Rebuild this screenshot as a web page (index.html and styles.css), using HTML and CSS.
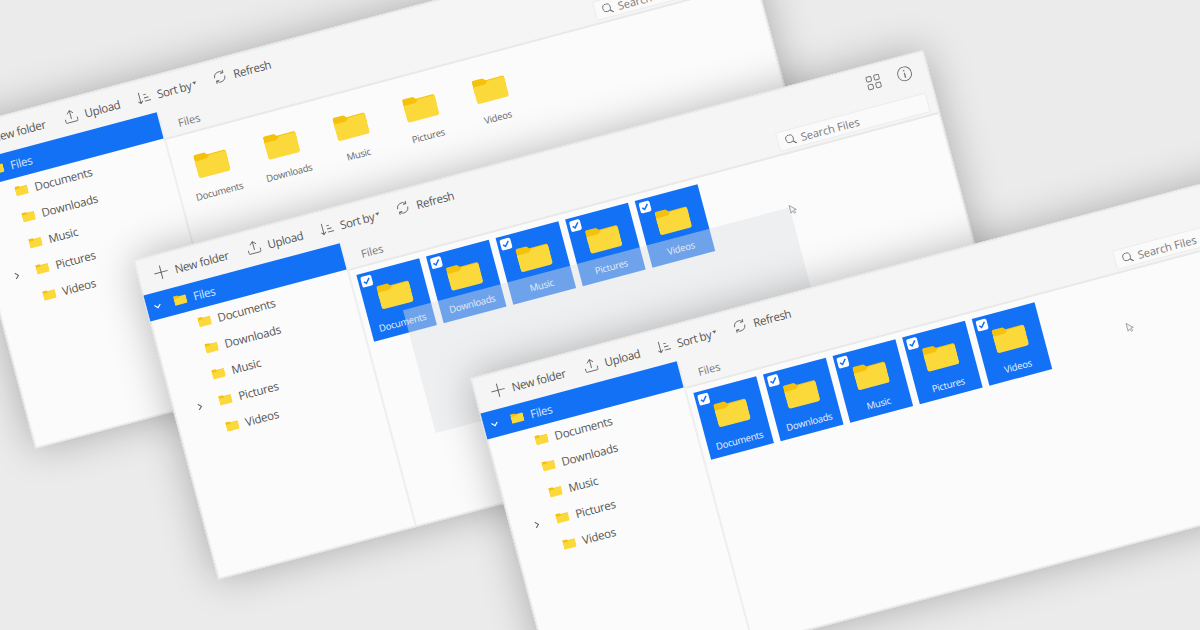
FILE: index.html
```html
<!DOCTYPE html>
<html lang="en">
<head>
  <meta charset="UTF-8" />
  <title>File Manager</title>
  <link rel="stylesheet" href="styles.css">
</head>
<body>
  <svg class="sprites" width="0" height="0">
    <symbol id="folder" viewBox="0 0 33 26">
      <path fill="#f4c20d" d="M0 3a2 2 0 0 1 2-2h9.500l2.500 2.500h17a2 2 0 0 1 2 2v8H0z"/>
      <path fill="#fcd93a" d="M0 7.500h11.500c1 0 1.500-.4 2.200-1l2-2h15.300a2 2 0 0 1 2 2V22a3 3 0 0 1-3 3H3a3 3 0 0 1-3-3z"/>
    </symbol>
    <symbol id="plus" viewBox="0 0 14 14">
      <path fill="none" stroke="#666" d="M7 0v14M0 7h14"/>
    </symbol>
    <symbol id="upload" viewBox="0 0 16 16">
      <path fill="none" stroke="#666" d="M8 11V1M4.500 4.500 8 1l3.500 3.500M1 10v3.500a1 1 0 0 0 1 1h12a1 1 0 0 0 1-1V10"/>
    </symbol>
    <symbol id="sort" viewBox="0 0 15 14">
      <path fill="none" stroke="#666" d="M3.500 1v12M1 10.500 3.500 13 6 10.500M8 4.500h3M8 8h5M8 11.500h7"/>
    </symbol>
    <symbol id="refresh" viewBox="0 0 16 16">
      <path fill="none" stroke="#666" d="M2 8a6 6 0 0 1 10.500-4M14 8a6 6 0 0 1-10.500 4M12.800 1v3.300H9.500M3.200 15v-3.300h3.300"/>
    </symbol>
    <symbol id="search" viewBox="0 0 13 13">
      <circle cx="5.500" cy="5.500" r="4.500" fill="none" stroke="#666"/>
      <path fill="none" stroke="#666" stroke-width="1.300" d="m8.800 8.800 3.700 3.700"/>
    </symbol>
    <symbol id="grid" viewBox="0 0 15 15">
      <g fill="none" stroke="#777">
        <rect x="1" y="1" width="5" height="5" rx="1.200"/>
        <rect x="9" y="1" width="5" height="5" rx="1.200"/>
        <rect x="1" y="9" width="5" height="5" rx="1.200"/>
        <rect x="9" y="9" width="5" height="5" rx="1.200"/>
      </g>
    </symbol>
    <symbol id="info" viewBox="0 0 15 15">
      <circle cx="7.500" cy="7.500" r="7" fill="none" stroke="#777"/>
      <path fill="none" stroke="#777" stroke-width="1.300" d="M7.500 6.500V11.500M7.500 3.500v1.400"/>
    </symbol>
    <symbol id="down" viewBox="0 0 8 8">
      <path fill="none" stroke="currentColor" stroke-width="1.200" d="M1 2.500 4 5.500 7 2.500"/>
    </symbol>
    <symbol id="right" viewBox="0 0 8 8">
      <path fill="none" stroke="#666" stroke-width="1.100" d="M2.500 1 5.500 4 2.500 7"/>
    </symbol>
    <symbol id="check" viewBox="0 0 11 11">
      <path fill="none" stroke="#1371f5" stroke-width="1.500" d="m2.500 5.500 2 2.200 4-4.700"/>
    </symbol>
    <symbol id="pointer" viewBox="0 0 8 11">
      <path fill="#f4f4f4" stroke="#999" stroke-width=".8" d="M1 1v8l2-1.800L4.300 10l1.400-.6-1.300-2.700H7z"/>
    </symbol>
  </svg>

  <!-- back window: nothing selected -->
  <div class="win win-back">
    <div class="toolbar">
      <span class="tool tool-new"><svg class="ic"><use href="#plus"/></svg>New folder</span>
      <span class="tool tool-upload"><svg class="ic"><use href="#upload"/></svg>Upload</span>
      <span class="tool tool-sort"><svg class="ic"><use href="#sort"/></svg>Sort by<i class="caret"></i></span>
      <span class="tool"><svg class="ic"><use href="#refresh"/></svg>Refresh</span>
      <span class="toolbar-right">
        <svg class="ic-view"><use href="#grid"/></svg>
        <svg class="ic-view"><use href="#info"/></svg>
      </span>
    </div>
    <div class="body">
      <ul class="tree">
        <li class="row root"><svg class="chev"><use href="#down"/></svg><svg class="fld"><use href="#folder"/></svg>Files</li>
        <li class="row"><svg class="fld"><use href="#folder"/></svg>Documents</li>
        <li class="row"><svg class="fld"><use href="#folder"/></svg>Downloads</li>
        <li class="row"><svg class="fld"><use href="#folder"/></svg>Music</li>
        <li class="row"><svg class="chev chev-sub"><use href="#right"/></svg><svg class="fld"><use href="#folder"/></svg>Pictures</li>
        <li class="row"><svg class="fld"><use href="#folder"/></svg>Videos</li>
      </ul>
      <div class="main">
        <div class="crumbs">
          <span>Files</span>
          <span class="search"><svg class="ic-search"><use href="#search"/></svg>Search Files</span>
        </div>
        <div class="tiles">
          <div class="tile"><svg class="tile-fld"><use href="#folder"/></svg><span class="tile-name">Documents</span></div>
          <div class="tile"><svg class="tile-fld"><use href="#folder"/></svg><span class="tile-name">Downloads</span></div>
          <div class="tile"><svg class="tile-fld"><use href="#folder"/></svg><span class="tile-name">Music</span></div>
          <div class="tile"><svg class="tile-fld"><use href="#folder"/></svg><span class="tile-name">Pictures</span></div>
          <div class="tile"><svg class="tile-fld"><use href="#folder"/></svg><span class="tile-name">Videos</span></div>
        </div>
      </div>
    </div>
  </div>

  <!-- middle window: drag selection in progress -->
  <div class="win win-mid">
    <div class="toolbar">
      <span class="tool tool-new"><svg class="ic"><use href="#plus"/></svg>New folder</span>
      <span class="tool tool-upload"><svg class="ic"><use href="#upload"/></svg>Upload</span>
      <span class="tool tool-sort"><svg class="ic"><use href="#sort"/></svg>Sort by<i class="caret"></i></span>
      <span class="tool"><svg class="ic"><use href="#refresh"/></svg>Refresh</span>
      <span class="toolbar-right">
        <svg class="ic-view"><use href="#grid"/></svg>
        <svg class="ic-view"><use href="#info"/></svg>
      </span>
    </div>
    <div class="body">
      <ul class="tree">
        <li class="row root"><svg class="chev"><use href="#down"/></svg><svg class="fld"><use href="#folder"/></svg>Files</li>
        <li class="row"><svg class="fld"><use href="#folder"/></svg>Documents</li>
        <li class="row"><svg class="fld"><use href="#folder"/></svg>Downloads</li>
        <li class="row"><svg class="fld"><use href="#folder"/></svg>Music</li>
        <li class="row"><svg class="chev chev-sub"><use href="#right"/></svg><svg class="fld"><use href="#folder"/></svg>Pictures</li>
        <li class="row"><svg class="fld"><use href="#folder"/></svg>Videos</li>
      </ul>
      <div class="main">
        <div class="crumbs">
          <span>Files</span>
          <span class="search"><svg class="ic-search"><use href="#search"/></svg>Search Files</span>
        </div>
        <div class="tiles">
          <div class="tile on"><svg class="tick"><use href="#check"/></svg><svg class="tile-fld"><use href="#folder"/></svg><span class="tile-name">Documents</span></div>
          <div class="tile on"><svg class="tick"><use href="#check"/></svg><svg class="tile-fld"><use href="#folder"/></svg><span class="tile-name">Downloads</span></div>
          <div class="tile on"><svg class="tick"><use href="#check"/></svg><svg class="tile-fld"><use href="#folder"/></svg><span class="tile-name">Music</span></div>
          <div class="tile on"><svg class="tick"><use href="#check"/></svg><svg class="tile-fld"><use href="#folder"/></svg><span class="tile-name">Pictures</span></div>
          <div class="tile on"><svg class="tick"><use href="#check"/></svg><svg class="tile-fld"><use href="#folder"/></svg><span class="tile-name">Videos</span></div>
        </div>
      </div>
    </div>
    <div class="marquee"></div>
    <svg class="pointer"><use href="#pointer"/></svg>
  </div>

  <!-- front window: selection done -->
  <div class="win win-front">
    <div class="toolbar">
      <span class="tool tool-new"><svg class="ic"><use href="#plus"/></svg>New folder</span>
      <span class="tool tool-upload"><svg class="ic"><use href="#upload"/></svg>Upload</span>
      <span class="tool tool-sort"><svg class="ic"><use href="#sort"/></svg>Sort by<i class="caret"></i></span>
      <span class="tool"><svg class="ic"><use href="#refresh"/></svg>Refresh</span>
      <span class="toolbar-right">
        <svg class="ic-view"><use href="#grid"/></svg>
        <svg class="ic-view"><use href="#info"/></svg>
      </span>
    </div>
    <div class="body">
      <ul class="tree">
        <li class="row root"><svg class="chev"><use href="#down"/></svg><svg class="fld"><use href="#folder"/></svg>Files</li>
        <li class="row"><svg class="fld"><use href="#folder"/></svg>Documents</li>
        <li class="row"><svg class="fld"><use href="#folder"/></svg>Downloads</li>
        <li class="row"><svg class="fld"><use href="#folder"/></svg>Music</li>
        <li class="row"><svg class="chev chev-sub"><use href="#right"/></svg><svg class="fld"><use href="#folder"/></svg>Pictures</li>
        <li class="row"><svg class="fld"><use href="#folder"/></svg>Videos</li>
      </ul>
      <div class="main">
        <div class="crumbs">
          <span>Files</span>
          <span class="search"><svg class="ic-search"><use href="#search"/></svg>Search Files</span>
        </div>
        <div class="tiles">
          <div class="tile on"><svg class="tick"><use href="#check"/></svg><svg class="tile-fld"><use href="#folder"/></svg><span class="tile-name">Documents</span></div>
          <div class="tile on"><svg class="tick"><use href="#check"/></svg><svg class="tile-fld"><use href="#folder"/></svg><span class="tile-name">Downloads</span></div>
          <div class="tile on"><svg class="tick"><use href="#check"/></svg><svg class="tile-fld"><use href="#folder"/></svg><span class="tile-name">Music</span></div>
          <div class="tile on"><svg class="tick"><use href="#check"/></svg><svg class="tile-fld"><use href="#folder"/></svg><span class="tile-name">Pictures</span></div>
          <div class="tile on"><svg class="tick"><use href="#check"/></svg><svg class="tile-fld"><use href="#folder"/></svg><span class="tile-name">Videos</span></div>
        </div>
      </div>
    </div>
    <svg class="pointer"><use href="#pointer"/></svg>
  </div>
</body>
</html>
```

FILE: styles.css
```css
html, body {
  margin: 0;
  height: 630px;
  overflow: hidden;
}
body {
  position: relative;
  background-color: #ebebeb;
  font-family: "Open Sans", "Noto Sans", sans-serif;
  color: #555;
}
.sprites {
  position: absolute;
}

/* windows sit on a free canvas, tilted the same way */
.win {
  position: absolute;
  box-sizing: border-box;
  width: 818px;
  height: 331px;
  display: flex;
  flex-direction: column;
  background-color: #fbfbfb;
  border: 1px solid #e0e0e0;
  outline: 1px solid #ececec;
  outline-offset: -2px;
  box-shadow: 0 0 40px rgba(0, 0, 0, 0.28);
  transform: rotate(-14.9deg);
  transform-origin: 0 0;
}
.win-back {
  left: -50px;
  top: 129px;
}
.win-mid {
  left: 133px;
  top: 260px;
}
.win-front {
  left: 470px;
  top: 378px;
}

.toolbar {
  display: flex;
  align-items: center;
  flex: none;
  height: 36px;
  padding-left: 16px;
  background-color: #f5f5f5;
  font-size: 11.5px;
  letter-spacing: -0.35px;
}
.tool {
  display: flex;
  align-items: center;
  white-space: nowrap;
}
.tool-new {
  width: 96px;
}
.tool-upload {
  width: 75px;
}
.tool-sort {
  width: 79px;
}
.ic {
  width: 14px;
  height: 14px;
  margin-right: 7px;
  flex: none;
}
.caret {
  width: 0;
  height: 0;
  margin: -2px 0 0 2px;
  border-left: 2.5px solid transparent;
  border-right: 2.5px solid transparent;
  border-top: 3px solid #666;
}
.toolbar-right {
  display: flex;
  gap: 17px;
  margin-left: auto;
  margin-right: 16px;
  transform: translateY(-1px);
}
.ic-view {
  width: 15px;
  height: 15px;
}

.body {
  display: grid;
  grid-template-columns: 203px 1fr;
  flex: 1;
  min-height: 0;
}
.tree {
  list-style: none;
  margin: 0;
  padding: 0;
  font-size: 11.5px;
  letter-spacing: -0.25px;
}
.row {
  position: relative;
  display: flex;
  align-items: center;
  height: 27px;
  padding-left: 46px;
}
.row.root {
  padding-left: 28px;
  background-color: #1371f5;
  color: #d6e6fc;
}
.chev {
  position: absolute;
  left: 7px;
  top: 10px;
  width: 8px;
  height: 8px;
}
.root .chev {
  color: #fff;
}
.chev-sub {
  left: 22px;
  top: 10px;
}
.fld {
  width: 13px;
  height: 11px;
  margin-right: 7px;
  flex: none;
}

.main {
  display: flex;
  flex-direction: column;
  border-left: 2px solid #eeeeee;
  min-width: 0;
}
.crumbs {
  display: flex;
  align-items: center;
  justify-content: space-between;
  flex: none;
  box-sizing: border-box;
  height: 29px;
  padding: 3px 8px 0 16px;
  background-color: #f5f5f5;
  border-bottom: 2px solid #e9e9e9;
  font-size: 11px;
  color: #777;
}
.search {
  display: flex;
  align-items: center;
  box-sizing: border-box;
  width: 156px;
  height: 20px;
  padding-left: 7px;
  border: 1px solid #ececec;
  border-radius: 2px;
  background-color: #fafafa;
  font-size: 11px;
}
.ic-search {
  width: 11px;
  height: 11px;
  margin-right: 5px;
}

.tiles {
  display: flex;
  gap: 7px;
  padding: 6px 0 0 6px;
}
.tile {
  position: relative;
  display: flex;
  flex-direction: column;
  align-items: center;
  width: 65px;
  height: 69px;
  font-size: 9.5px;
  letter-spacing: -0.25px;
  color: #666;
}
.tile.on {
  background-color: #1371f5;
  color: #eef4fe;
}
.tile-fld {
  width: 33px;
  height: 26px;
  margin-top: 15px;
}
.tile-name {
  margin-top: 10px;
}
.tick {
  position: absolute;
  left: 3px;
  top: 3px;
  width: 11px;
  height: 11px;
  background-color: #fff;
  border-radius: 2px;
}

/* translucent drag rectangle, lies over the tiles */
.marquee {
  position: absolute;
  left: 247px;
  top: 117px;
  width: 400px;
  height: 127px;
  background-color: rgba(221, 223, 226, 0.45);
}
.pointer {
  position: absolute;
  left: 646px;
  top: 114px;
  width: 8px;
  height: 11px;
}
```
